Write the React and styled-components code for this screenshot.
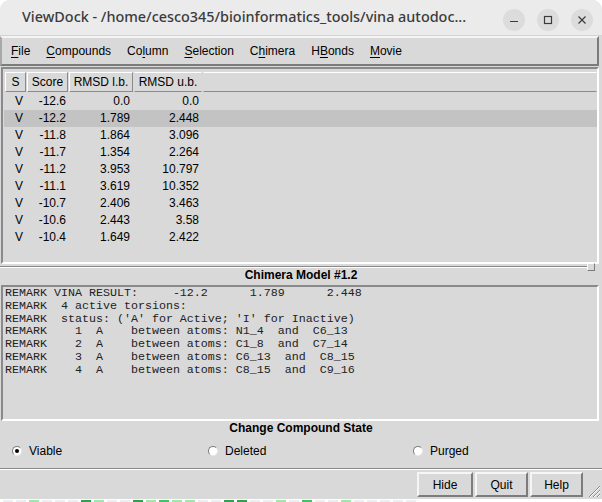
import React from 'react';
import styled, { createGlobalStyle } from 'styled-components';

const Global = createGlobalStyle`
  html, body { margin: 0; padding: 0; background: #ffffff; }
  body { width: 602px; height: 502px; overflow: hidden; font-family: "Liberation Sans", Arial, sans-serif; }
`;

const Screen = styled.div`
  width: 602px;
  height: 502px;
  display: flex;
  flex-direction: column;
  background: #ffffff;
`;

const Window = styled.div`
  position: relative;
  height: 499px;
  display: flex;
  flex-direction: column;
  background: #d9d9d9;
  border-radius: 10px 10px 0 0;
  overflow: hidden;
`;

const TitleBar = styled.div`
  height: 35px;
  flex: none;
  display: flex;
  align-items: center;
  padding: 0 9px 0 22px;
  background: #ebebeb;
  border-bottom: 1px solid #d3d3d3;
`;

const Title = styled.div`
  flex: 1;
  font-family: "Noto Sans", "Open Sans", sans-serif;
  font-size: 14.4px;
  font-weight: 500;
  color: #3b3b3b;
  white-space: nowrap;
  overflow: hidden;
  margin-top: -2px;
`;

const WinButtons = styled.div`
  display: flex;
  gap: 12px;
  margin-top: 4px;
`;

const WinButton = styled.div`
  width: 22px;
  height: 22px;
  border-radius: 50%;
  background: #dcdcdc;
  display: flex;
  align-items: center;
  justify-content: center;
  color: #3b3b3b;
`;

const MenuBar = styled.div`
  height: 26px;
  flex: none;
  display: flex;
  align-items: center;
  padding-left: 1px;
  margin-right: 3px;
  border-style: solid;
  border-width: 2px;
  border-color: #f4f4f4 #7c7c7c #7c7c7c #a8a8a8;
`;

const MenuItem = styled.div`
  font-size: 12px;
  padding: 0 8px;
  color: #000;
  & u { text-decoration: underline; text-underline-offset: 2px; }
`;

const TableFrame = styled.div`
  height: 190px;
  flex: none;
  margin: 1px 3px 0 1px;
  padding: 3px 0 0 2px;
  border-style: solid;
  border-width: 2px;
  border-color: #8a8a8a #ffffff #ffffff #8a8a8a;
  overflow: hidden;
`;

const HeaderRow = styled.div`
  display: flex;
  height: 20px;
  gap: 1px;
  margin-bottom: 1px;
`;

const HeaderCell = styled.div`
  width: ${p => p.$w}px;
  flex: ${p => (p.$fill ? 1 : 'none')};
  box-sizing: border-box;
  font-size: 12px;
  line-height: 18px;
  text-align: center;
  color: #000;
  border-style: solid;
  border-width: 1px;
  border-color: #ffffff ${p => (p.$open ? 'transparent' : '#8a8a8a')} #8a8a8a ${p => (p.$open ? '#d9d9d9' : '#ffffff')};
`;

const Row = styled.div`
  display: flex;
  height: 17px;
  margin-left: -1px;
  padding-left: 1px;
  background: ${p => (p.$sel ? '#c3c3c3' : 'transparent')};
`;

const Cell = styled.div`
  width: ${p => p.$w}px;
  flex: none;
  box-sizing: border-box;
  padding-right: ${p => p.$pr}px;
  font-size: 12px;
  line-height: 17px;
  text-align: right;
  color: #000;
`;

const Sash = styled.div`
  position: relative;
  height: 4px;
  flex: none;
  &::before {
    content: "";
    position: absolute;
    left: 0;
    right: 14px;
    top: 2px;
    border-top: 1px solid #8a8a8a;
    border-bottom: 1px solid #ffffff;
  }
`;

const SashHandle = styled.div`
  position: absolute;
  right: 7px;
  top: -1px;
  width: 6px;
  height: 6px;
  background: #d9d9d9;
  border-style: solid;
  border-width: 1px;
  border-color: #ffffff #7c7c7c #7c7c7c #ffffff;
`;

const SectionTitle = styled.div`
  flex: none;
  height: 15px;
  font-size: 12px;
  font-weight: bold;
  line-height: 15px;
  text-align: center;
  color: #000;
`;

const TextArea = styled.pre`
  flex: none;
  height: 132px;
  margin: 2px 3px 0 1px;
  padding: 0 0 0 2px;
  border-style: solid;
  border-width: 2px;
  border-color: #8a8a8a #ffffff #ffffff #8a8a8a;
  font-family: "Liberation Mono", "Courier New", monospace;
  font-size: 11.67px;
  line-height: 12.8px;
  color: #222;
  overflow: hidden;
`;

const RadioRow = styled.div`
  flex: none;
  height: 30px;
  display: grid;
  grid-template-columns: 196px 205px auto;
  align-items: center;
  padding-left: 12px;
`;

const RadioLabel = styled.label`
  display: flex;
  align-items: center;
  gap: 7px;
  font-size: 12px;
  color: #000;
`;

const RadioDot = styled.span`
  width: 10px;
  height: 10px;
  box-sizing: border-box;
  border-radius: 50%;
  background: #ffffff;
  border-style: solid;
  border-width: 1px;
  border-color: #7c7c7c #e8e8e8 #e8e8e8 #7c7c7c;
  display: flex;
  align-items: center;
  justify-content: center;
  &::after {
    content: "";
    width: 4px;
    height: 4px;
    border-radius: 50%;
    background: ${p => (p.$on ? '#000' : 'transparent')};
  }
`;

const Separator = styled.div`
  flex: none;
  margin-top: 2px;
  border-top: 1px solid #8a8a8a;
  border-bottom: 1px solid #ffffff;
`;

const ButtonRow = styled.div`
  flex: none;
  display: flex;
  justify-content: flex-end;
  gap: 2px;
  padding: 2px 19px 0 0;
`;

const Button = styled.div`
  width: ${p => p.$w}px;
  height: 25px;
  box-sizing: border-box;
  display: flex;
  align-items: center;
  justify-content: center;
  font-size: 12px;
  color: #000;
  background: #d9d9d9;
  border-style: solid;
  border-width: 2px;
  border-color: #f6f6f6 #7c7c7c #7c7c7c #f6f6f6;
`;

const Grip = styled.svg`
  position: absolute;
  right: 1px;
  bottom: 1px;
`;

const Strip = styled.div`
  flex: 1;
  display: flex;
  align-items: flex-end;
  gap: 3px;
  padding-left: 3px;
`;

const Square = styled.span`
  width: 10px;
  height: 2px;
  flex: none;
  background: ${p => p.$c};
`;

const cols = [
  { w: 22, pr: 4 },
  { w: 42, pr: 3 },
  { w: 65, pr: 4 },
  { w: 68, pr: 3 },
];

const rows = [
  ['V', '-12.6', '0.0', '0.0'],
  ['V', '-12.2', '1.789', '2.448'],
  ['V', '-11.8', '1.864', '3.096'],
  ['V', '-11.7', '1.354', '2.264'],
  ['V', '-11.2', '3.953', '10.797'],
  ['V', '-11.1', '3.619', '10.352'],
  ['V', '-10.7', '2.406', '3.463'],
  ['V', '-10.6', '2.443', '3.58'],
  ['V', '-10.4', '1.649', '2.422'],
];

const remark = [
  'REMARK VINA RESULT:     -12.2      1.789      2.448',
  'REMARK  4 active torsions:',
  "REMARK  status: ('A' for Active; 'I' for Inactive)",
  'REMARK    1  A    between atoms: N1_4  and  C6_13',
  'REMARK    2  A    between atoms: C1_8  and  C7_14',
  'REMARK    3  A    between atoms: C6_13  and  C8_15',
  'REMARK    4  A    between atoms: C8_15  and  C9_16',
].join('\n');

const palette = ['#ebedf0', '#9be9a8', '#40c463', '#30a14e'];
const squares = [0, 0, 1, 0, 0, 0, 3, 1, 0, 0, 3, 1, 2, 1, 1, 0, 0, 3, 3, 0, 0, 1, 0, 2, 0, 0, 1, 0, 0, 0, 0, 0];

const Menu = ({ pre, u, post }) => (
  <MenuItem>{pre}<u>{u}</u>{post}</MenuItem>
);

export default function App() {
  return (
    <Screen>
      <Global />
      <Window>
        <TitleBar>
          <Title>ViewDock - /home/cesco345/bioinformatics_tools/vina autodoc...</Title>
          <WinButtons>
            <WinButton>
              <svg width="10" height="10" viewBox="0 0 10 10"><path d="M1 6.5h8" stroke="#3b3b3b" strokeWidth="1.2" /></svg>
            </WinButton>
            <WinButton>
              <svg width="10" height="10" viewBox="0 0 10 10"><rect x="1.5" y="1.5" width="7" height="7" fill="none" stroke="#3b3b3b" strokeWidth="1.2" /></svg>
            </WinButton>
            <WinButton>
              <svg width="10" height="10" viewBox="0 0 10 10"><path d="M1.5 1.5l7 7M8.5 1.5l-7 7" stroke="#3b3b3b" strokeWidth="1.2" /></svg>
            </WinButton>
          </WinButtons>
        </TitleBar>

        <MenuBar>
          <Menu pre="" u="F" post="ile" />
          <Menu pre="" u="C" post="ompounds" />
          <Menu pre="Co" u="l" post="umn" />
          <Menu pre="" u="S" post="election" />
          <Menu pre="C" u="h" post="imera" />
          <Menu pre="H" u="B" post="onds" />
          <Menu pre="" u="M" post="ovie" />
        </MenuBar>

        <TableFrame>
          <HeaderRow>
            <HeaderCell $w={21}>S</HeaderCell>
            <HeaderCell $w={41}>Score</HeaderCell>
            <HeaderCell $w={64}>RMSD l.b.</HeaderCell>
            <HeaderCell $w={68} $open>RMSD u.b.</HeaderCell>
            <HeaderCell $fill $open />
          </HeaderRow>
          {rows.map((r, i) => (
            <Row key={i} $sel={i === 1}>
              {r.map((v, j) => (
                <Cell key={j} $w={cols[j].w} $pr={cols[j].pr}>{v}</Cell>
              ))}
            </Row>
          ))}
        </TableFrame>

        <Sash><SashHandle /></Sash>
        <SectionTitle>Chimera Model #1.2</SectionTitle>
        <TextArea>{remark}</TextArea>
        <SectionTitle>Change Compound State</SectionTitle>

        <RadioRow>
          <RadioLabel><RadioDot $on />Viable</RadioLabel>
          <RadioLabel><RadioDot />Deleted</RadioLabel>
          <RadioLabel><RadioDot />Purged</RadioLabel>
        </RadioRow>

        <Separator />

        <ButtonRow>
          <Button $w={56}>Hide</Button>
          <Button $w={53}>Quit</Button>
          <Button $w={53}>Help</Button>
        </ButtonRow>

        <Grip width="14" height="14" viewBox="0 0 14 14">
          <path d="M13 2L2 13M13 6L6 13M13 10L10 13" stroke="#8a8a8a" strokeWidth="1" />
          <path d="M13 3L3 13M13 7L7 13M13 11L11 13" stroke="#ffffff" strokeWidth="1" />
        </Grip>
      </Window>
      <Strip>
        {squares.map((c, i) => <Square key={i} $c={palette[c]} />)}
      </Strip>
    </Screen>
  );
}
